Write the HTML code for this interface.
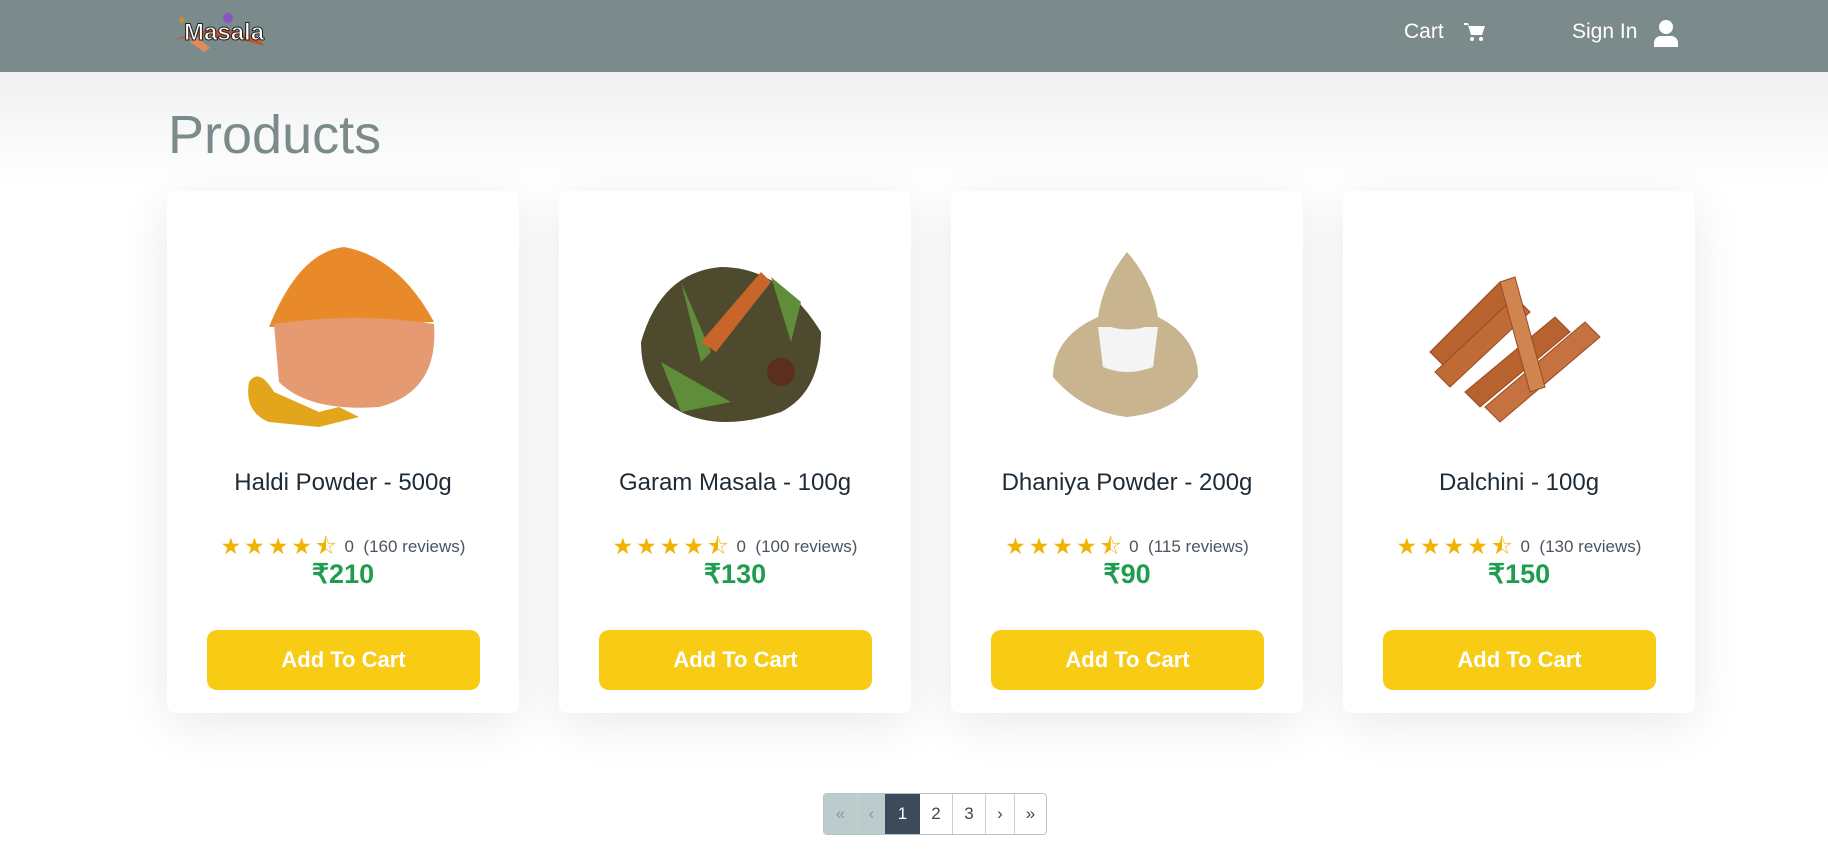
<!DOCTYPE html>
<html><head><meta charset="utf-8"><style>
*{box-sizing:border-box;margin:0;padding:0}
body{width:1828px;height:850px;overflow:hidden;background:#fff;font-family:"Segoe UI","Liberation Sans",sans-serif;position:relative}
.nav{position:absolute;left:0;top:0;width:1828px;height:72px;background:#7b8a8b}
.nav .t{position:absolute;color:#fff;font-size:21px;top:20px}
.bg{position:absolute;left:0;top:72px;width:1828px;height:780px;background:linear-gradient(#eff0f1,#fff 110px)}
h1{position:absolute;left:168px;top:104px;font-size:54px;font-weight:500;color:#7b8a8b}
.card{position:absolute;top:191px;width:352px;height:522px;background:#fff;border-radius:8px;box-shadow:0 10px 50px rgba(0,0,0,.09)}
.card svg{position:absolute;left:62px;top:51px}
.ttl{position:absolute;top:278px;width:100%;text-align:center;font-size:24px;color:#1e2b36;font-weight:500}
.rt{position:absolute;top:339px;width:100%;text-align:center;font-size:17px;color:#4a5560;white-space:nowrap}
.rt b{color:#f0b400;font-size:23px;letter-spacing:3px;font-weight:normal;vertical-align:-2px}
.pr{position:absolute;top:368px;width:100%;text-align:center;font-size:27px;font-weight:bold;color:#1f9d4f}
.btn{position:absolute;left:40px;top:439px;width:273px;height:60px;background:#f8cb15;border-radius:10px;color:#fff;font-size:22px;font-weight:bold;text-align:center;line-height:60px}
.pg{position:absolute;top:793px;height:42px;display:flex;left:823px;border:1px solid #b9c5c6;border-radius:4px;overflow:hidden}
.pg div{height:40px;line-height:40px;text-align:center;font-size:17px;color:#3b4a5a;border-left:1px solid #c8d0d1}
</style></head><body>
<div class="nav">
<div style="position:absolute;left:170px;top:12px;width:100px;height:36px">
<svg width="110" height="40" viewBox="0 0 110 40"><path d="M5 28 Q40 18 95 34 L85 24 Q40 10 5 28Z" fill="#c1542a"/><path d="M20 30 l14 10 6-4-12-10z" fill="#e38a5a"/><circle cx="58" cy="6" r="5" fill="#8a54c8"/><circle cx="12" cy="8" r="3" fill="#c78a3a"/><text x="14" y="28" font-family="Liberation Sans" font-weight="bold" font-size="24" fill="#fff" stroke="#222" stroke-width="1">Masala</text></svg></div>
<div class="t" style="left:1404px">Cart</div>
<svg style="position:absolute;left:1464px;top:22px" width="22" height="20" viewBox="0 0 22 20"><path d="M0 1h4l1 3h16l-3 9H7L4 3H0z" fill="#fff"/><circle cx="8" cy="17" r="2" fill="#fff"/><circle cx="17" cy="17" r="2" fill="#fff"/></svg>
<div class="t" style="left:1572px">Sign In</div>
<svg style="position:absolute;left:1654px;top:20px" width="24" height="27" viewBox="0 0 24 27"><circle cx="12" cy="7" r="7" fill="#fff"/><path d="M0 27v-4a7 7 0 0 1 7-7h10a7 7 0 0 1 7 7v4z" fill="#fff"/></svg>
</div>
<div class="bg"></div>
<h1>Products</h1>

<div class="card" style="left:167px">
<svg width="228" height="196" viewBox="0 0 228 196"><path d="M40 85 Q70 10 115 5 Q170 15 205 80 Z" fill="#e88a2a"/><path d="M45 82 Q125 70 205 82 Q210 150 150 165 Q80 170 50 140 Z" fill="#e59a72"/><path d="M20 140 Q30 125 45 150 L90 170 L110 165 L130 175 L90 185 L40 180 Q15 170 20 140Z" fill="#e2a51c"/></svg>
<div class="ttl">Haldi Powder - 500g</div>
<div class="rt"><b>★★★★⯪</b> 0 &nbsp;(160 reviews)</div>
<div class="pr">₹210</div>
<div class="btn">Add To Cart</div></div>

<div class="card" style="left:559px">
<svg width="228" height="196" viewBox="0 0 228 196"><path d="M20 100 Q40 30 100 25 Q160 25 200 90 Q200 150 160 170 Q100 190 60 170 Q20 150 20 100Z" fill="#4e4a2e"/><path d="M60 40 L80 120 L90 110 Z M150 35 L170 100 L180 60Z M40 120 L110 160 L60 170Z" fill="#5f8d3a"/><path d="M80 100 L140 30 L150 40 L95 110Z" fill="#c8652a"/><circle cx="160" cy="130" r="14" fill="#5a2f1e"/></svg>
<div class="ttl">Garam Masala - 100g</div>
<div class="rt"><b>★★★★⯪</b> 0 &nbsp;(100 reviews)</div>
<div class="pr">₹130</div>
<div class="btn">Add To Cart</div></div>

<div class="card" style="left:951px">
<svg width="228" height="196" viewBox="0 0 228 196"><path d="M114 10 Q90 40 85 75 Q40 95 40 135 Q70 170 114 175 Q165 170 185 135 Q185 95 145 75 Q140 40 114 10Z" fill="#c8b48e"/><path d="M85 85 L145 85 L140 125 Q114 135 90 125Z" fill="#f4f4f4"/><path d="M85 80 Q114 95 145 80 Q130 70 114 72 Q100 70 85 80Z" fill="#c8b48e"/></svg>
<div class="ttl">Dhaniya Powder - 200g</div>
<div class="rt"><b>★★★★⯪</b> 0 &nbsp;(115 reviews)</div>
<div class="pr">₹90</div>
<div class="btn">Add To Cart</div></div>

<div class="card" style="left:1343px">
<svg width="228" height="196" viewBox="0 0 228 196"><g stroke="#9a4a22" stroke-width="1"><path d="M25 110 L95 40 L110 55 L40 125Z" fill="#b8622f"/><path d="M30 130 L110 55 L125 70 L45 145Z" fill="#c06a35"/><path d="M60 150 L150 75 L165 90 L75 165Z" fill="#b8622f"/><path d="M80 165 L180 80 L195 95 L95 180Z" fill="#c67240"/><path d="M95 40 L125 150 L140 145 L110 35Z" fill="#d08450"/></g></svg>
<div class="ttl">Dalchini - 100g</div>
<div class="rt"><b>★★★★⯪</b> 0 &nbsp;(130 reviews)</div>
<div class="pr">₹150</div>
<div class="btn">Add To Cart</div></div>

<div class="pg">
<div style="width:33px;background:#bccccd;color:#8a9a9c;border:none">«</div>
<div style="width:28px;background:#bccccd;color:#8a9a9c">‹</div>
<div style="width:35px;background:#3c4b5c;color:#fff;border:none">1</div>
<div style="width:32px;border:none">2</div>
<div style="width:33px">3</div>
<div style="width:29px">›</div>
<div style="width:32px">»</div>
</div>
</body></html>
